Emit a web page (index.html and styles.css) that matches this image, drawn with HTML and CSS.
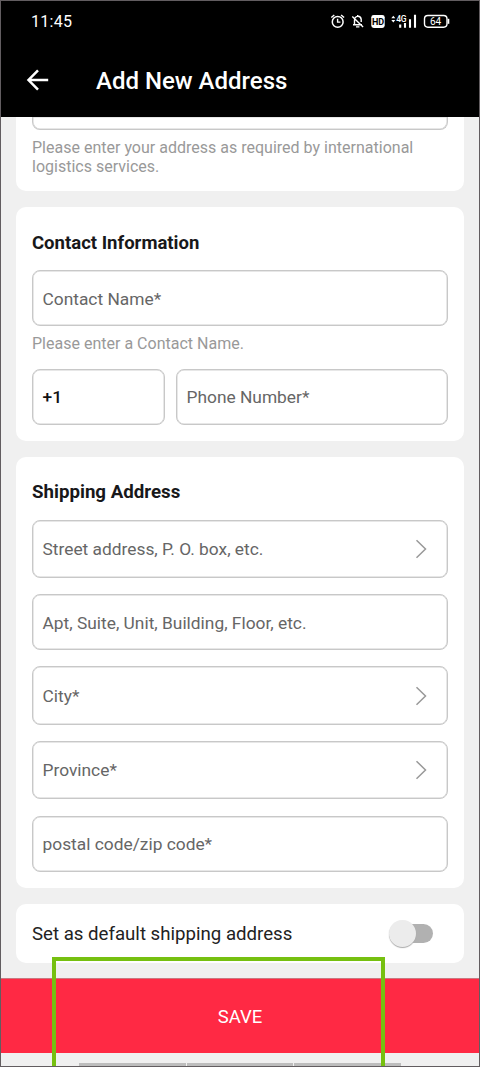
FILE: index.html
```html
<!DOCTYPE html>
<html lang="en">
<head>
<meta charset="utf-8">
<title>Add New Address</title>
<link rel="stylesheet" href="styles.css">
</head>
<body>
<div class="phone">
  <header class="header">
    <div class="status">
      <span class="clock">11:45</span>
      <svg class="status-icons" width="122" height="18" viewBox="0 0 122 18" fill="none" stroke="#fff">
        <circle cx="9.700" cy="9.900" r="5.400" stroke-width="1.500"/>
        <path d="M3.300 5.600l3-2.700M16.100 5.600l-3-2.700M9.600 6.700v3.400h2.800" stroke-width="1.400"/>
        <path d="M25 12.700h9M26.500 12.400V8.400c0-5 6-5.500 6.700-1v2.700M28 14.900h3.400M24.300 4.400l10.800 10.500M29.700 4.400V2.900" stroke-width="1.400"/>
        <rect x="43.300" y="2.900" width="13.400" height="13" rx="2.400" fill="#fff" stroke="none"/>
        <text class="hd-label" x="50" y="12.800" text-anchor="middle">HD</text>
        <path d="M63.300 6.200l2-2.500 2 2.500zM63.300 8l2 2.500 2-2.500z" fill="#fff" stroke="none"/>
        <text class="net-label" x="68.300" y="9.700">4G</text>
        <path d="M72.200 12.500v3.200M77 11v4.700M82 7.200v8.500M87 2.700v13" stroke-width="2.100"/>
        <rect x="96.500" y="3.500" width="22.500" height="11.700" rx="3.400" stroke-width="1.400"/>
        <path d="M120.500 6.800v5" stroke-width="1.600"/>
        <text class="battery-label" x="107.500" y="12.900" text-anchor="middle">64</text>
      </svg>
    </div>
    <div class="title-bar">
      <svg class="back" width="24" height="24" viewBox="0 0 24 24" fill="none" stroke="#fff" stroke-width="2.500"><path d="M22.200 12H3M12 2.300L2.500 12l9.500 9.700"/></svg>
      <h1 class="title">Add New Address</h1>
    </div>
  </header>
  <main class="content">
    <section class="card card-clipped">
      <div class="field field-clipped"></div>
      <p class="hint hint-address">Please enter your address as required by international<br>logistics services.</p>
    </section>
    <section class="card card-contact">
      <h2 class="heading heading-contact">Contact Information</h2>
      <div class="field">Contact Name*</div>
      <p class="hint hint-name">Please enter a Contact Name.</p>
      <div class="phone-row">
        <div class="field code">+1</div>
        <div class="field field-phone">Phone Number*</div>
      </div>
    </section>
    <section class="card card-shipping">
      <h2 class="heading heading-shipping">Shipping Address</h2>
      <div class="stack">
        <div class="field select">Street address, P. O. box, etc.<svg class="chevron" width="12" height="20" viewBox="0 0 12 20"><path d="M1.500 1.200l9 8.800-9 8.800"/></svg></div>
        <div class="field">Apt, Suite, Unit, Building, Floor, etc.</div>
        <div class="field select">City*<svg class="chevron" width="12" height="20" viewBox="0 0 12 20"><path d="M1.500 1.200l9 8.800-9 8.800"/></svg></div>
        <div class="field select">Province*<svg class="chevron" width="12" height="20" viewBox="0 0 12 20"><path d="M1.500 1.200l9 8.800-9 8.800"/></svg></div>
        <div class="field">postal code/zip code*</div>
      </div>
    </section>
    <section class="card card-default">
      <span class="default-label">Set as default shipping address</span>
      <span class="toggle"><span class="knob"></span></span>
    </section>
  </main>
  <div class="save">SAVE</div>
  <div class="nav"><i></i><i></i><i></i></div>
  <div class="highlight"></div>
</div>
</body>
</html>
```
FILE: styles.css
```css
* { box-sizing: border-box; }
body { margin: 0; font-family: Roboto, sans-serif; }
h1, h2, p { margin: 0; }
.phone {
  position: relative;
  display: flex;
  flex-direction: column;
  width: 480px;
  height: 1067px;
  overflow: hidden;
  border: 1px solid #625d60;
  background: #f0f0f0;
}
.header { height: 116px; flex: none; background: #000; color: #fff; }
.status {
  display: flex;
  align-items: center;
  justify-content: space-between;
  height: 40px;
  padding: 0 29px 0 30px;
}
.clock { font-size: 16px; letter-spacing: 0.300px; }
.hd-label, .net-label, .battery-label { stroke: none; font-family: Roboto, sans-serif; }
.hd-label { fill: #000; font-size: 9px; font-weight: 700; }
.net-label { fill: #fff; font-size: 8.500px; font-weight: 500; letter-spacing: -0.500px; }
.battery-label { fill: #fff; font-size: 10px; }
.title-bar { display: flex; align-items: center; height: 78px; padding-left: 25px; }
.back { flex: none; }
.title { margin-left: 46px; padding-top: 2px; font-size: 24px; font-weight: 500; line-height: 30px; }
.content { display: flex; flex-direction: column; gap: 16px; height: 861px; flex: none; padding: 0 15px; }
.card { flex: none; padding: 0 16px; border-radius: 10px; background: #fff; }
.card-clipped { height: 74px; border-radius: 0 0 10px 10px; }
.card-contact { height: 234px; }
.card-shipping { height: 431px; }
.heading { padding-top: 23px; height: 63px; font-size: 18.550px; font-weight: 700; line-height: 24px; color: #18181a; }
.heading-contact { padding-top: 24px; }
.heading-shipping { height: 62.700px; font-size: 18.700px; }
.field {
  display: flex;
  align-items: center;
  height: 56px;
  padding: 1px 9.500px 0;
  border: 1.500px solid #c8c8c8;
  border-radius: 8px;
  box-shadow: inset 0 0 0 0.500px #d0d0d0;
  font-size: 17.350px;
  color: #666;
}
.field-clipped { height: 13px; border-top: 0; border-radius: 0 0 8px 8px; }
.hint { font-size: 16.020px; line-height: 19px; color: #999; }
.hint-address { padding-top: 8px; }
.hint-name { padding-top: 8px; height: 43px; }
.phone-row { display: grid; grid-template-columns: 133px 272px; gap: 11px; }
.code, .field-phone { padding-top: 0; }
.code { color: #111; font-weight: 500; }
.stack { display: flex; flex-direction: column; gap: 16.200px; }
.select { height: 58.400px; justify-content: space-between; padding-top: 0; padding-right: 20px; }
.chevron { fill: none; stroke: #999; stroke-width: 1.500px; }
.card-default {
  display: flex;
  align-items: center;
  justify-content: space-between;
  height: 58.500px;
  padding-right: 31px;
}
.default-label { padding-top: 1px; font-size: 18.650px; color: #222; }
.toggle { position: relative; width: 41px; height: 19px; border-radius: 10px; background: #b1b1b1; }
.knob {
  position: absolute;
  left: -3px;
  top: -4px;
  width: 27px;
  height: 27px;
  border-radius: 50%;
  background: #ececec;
  box-shadow: 0 1px 1px #aaa;
}
.save {
  display: flex;
  align-items: center;
  justify-content: center;
  height: 75px;
  flex: none;
  padding-top: 2px;
  border-top: 1px solid #c97880;
  background: #ff2944;
  color: #fff;
  font-size: 18.500px;
}
.nav { display: flex; gap: 1px; height: 13px; padding: 10px 78px 0; }
.nav i { flex: 1; background: #bdbdbd; }
.highlight {
  position: absolute;
  left: 51px;
  top: 956px;
  width: 333px;
  height: 120px;
  border: 4px solid #76c010;
}
```
